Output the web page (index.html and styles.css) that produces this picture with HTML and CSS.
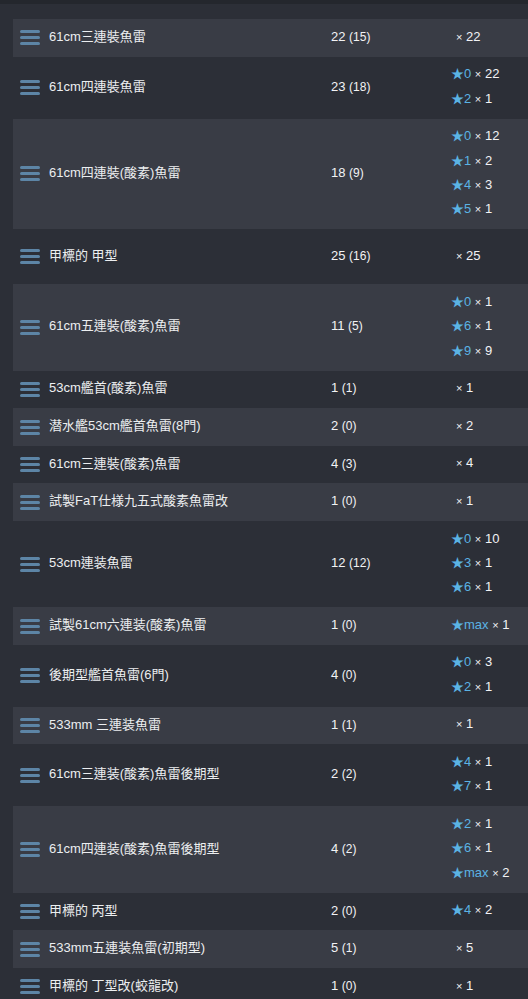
FILE: index.html
```html
<!DOCTYPE html>
<html lang="zh-Hant">
<head>
<meta charset="utf-8">
<title>魚雷一覧</title>
<link rel="stylesheet" href="styles.css">
</head>
<body>
<div class="topbar"></div>
<div class="list">
  <div class="row">
    <span class="ic"><svg viewBox="0 0 20 15" width="20" height="15"><rect x="0" y="0" width="20" height="3" rx="1.5"/><rect x="0" y="6" width="20" height="3" rx="1.5"/><rect x="0" y="12" width="20" height="3" rx="1.5"/></svg></span>
    <span class="name">61cm三連裝魚雷</span>
    <span class="cnt">22 <small>(15)</small></span>
    <span class="stars"><span class="ln nostar"><i>×</i> 22</span></span>
  </div>
  <div class="row">
    <span class="ic"><svg viewBox="0 0 20 15" width="20" height="15"><rect x="0" y="0" width="20" height="3" rx="1.5"/><rect x="0" y="6" width="20" height="3" rx="1.5"/><rect x="0" y="12" width="20" height="3" rx="1.5"/></svg></span>
    <span class="name">61cm四連裝魚雷</span>
    <span class="cnt">23 <small>(18)</small></span>
    <span class="stars"><span class="ln"><b>★0</b> <i>×</i> 22</span><span class="ln"><b>★2</b> <i>×</i> 1</span></span>
  </div>
  <div class="row">
    <span class="ic"><svg viewBox="0 0 20 15" width="20" height="15"><rect x="0" y="0" width="20" height="3" rx="1.5"/><rect x="0" y="6" width="20" height="3" rx="1.5"/><rect x="0" y="12" width="20" height="3" rx="1.5"/></svg></span>
    <span class="name">61cm四連裝(酸素)魚雷</span>
    <span class="cnt">18 <small>(9)</small></span>
    <span class="stars"><span class="ln"><b>★0</b> <i>×</i> 12</span><span class="ln"><b>★1</b> <i>×</i> 2</span><span class="ln"><b>★4</b> <i>×</i> 3</span><span class="ln"><b>★5</b> <i>×</i> 1</span></span>
  </div>
  <div class="row tall">
    <span class="ic"><svg viewBox="0 0 20 15" width="20" height="15"><rect x="0" y="0" width="20" height="3" rx="1.5"/><rect x="0" y="6" width="20" height="3" rx="1.5"/><rect x="0" y="12" width="20" height="3" rx="1.5"/></svg></span>
    <span class="name">甲標的 甲型</span>
    <span class="cnt">25 <small>(16)</small></span>
    <span class="stars"><span class="ln nostar"><i>×</i> 25</span></span>
  </div>
  <div class="row">
    <span class="ic"><svg viewBox="0 0 20 15" width="20" height="15"><rect x="0" y="0" width="20" height="3" rx="1.5"/><rect x="0" y="6" width="20" height="3" rx="1.5"/><rect x="0" y="12" width="20" height="3" rx="1.5"/></svg></span>
    <span class="name">61cm五連裝(酸素)魚雷</span>
    <span class="cnt">11 <small>(5)</small></span>
    <span class="stars"><span class="ln"><b>★0</b> <i>×</i> 1</span><span class="ln"><b>★6</b> <i>×</i> 1</span><span class="ln"><b>★9</b> <i>×</i> 9</span></span>
  </div>
  <div class="row">
    <span class="ic"><svg viewBox="0 0 20 15" width="20" height="15"><rect x="0" y="0" width="20" height="3" rx="1.5"/><rect x="0" y="6" width="20" height="3" rx="1.5"/><rect x="0" y="12" width="20" height="3" rx="1.5"/></svg></span>
    <span class="name">53cm艦首(酸素)魚雷</span>
    <span class="cnt">1 <small>(1)</small></span>
    <span class="stars"><span class="ln nostar"><i>×</i> 1</span></span>
  </div>
  <div class="row">
    <span class="ic"><svg viewBox="0 0 20 15" width="20" height="15"><rect x="0" y="0" width="20" height="3" rx="1.5"/><rect x="0" y="6" width="20" height="3" rx="1.5"/><rect x="0" y="12" width="20" height="3" rx="1.5"/></svg></span>
    <span class="name">潜水艦53cm艦首魚雷(8門)</span>
    <span class="cnt">2 <small>(0)</small></span>
    <span class="stars"><span class="ln nostar"><i>×</i> 2</span></span>
  </div>
  <div class="row">
    <span class="ic"><svg viewBox="0 0 20 15" width="20" height="15"><rect x="0" y="0" width="20" height="3" rx="1.5"/><rect x="0" y="6" width="20" height="3" rx="1.5"/><rect x="0" y="12" width="20" height="3" rx="1.5"/></svg></span>
    <span class="name">61cm三連裝(酸素)魚雷</span>
    <span class="cnt">4 <small>(3)</small></span>
    <span class="stars"><span class="ln nostar"><i>×</i> 4</span></span>
  </div>
  <div class="row">
    <span class="ic"><svg viewBox="0 0 20 15" width="20" height="15"><rect x="0" y="0" width="20" height="3" rx="1.5"/><rect x="0" y="6" width="20" height="3" rx="1.5"/><rect x="0" y="12" width="20" height="3" rx="1.5"/></svg></span>
    <span class="name">試製FaT仕様九五式酸素魚雷改</span>
    <span class="cnt">1 <small>(0)</small></span>
    <span class="stars"><span class="ln nostar"><i>×</i> 1</span></span>
  </div>
  <div class="row">
    <span class="ic"><svg viewBox="0 0 20 15" width="20" height="15"><rect x="0" y="0" width="20" height="3" rx="1.5"/><rect x="0" y="6" width="20" height="3" rx="1.5"/><rect x="0" y="12" width="20" height="3" rx="1.5"/></svg></span>
    <span class="name">53cm連装魚雷</span>
    <span class="cnt">12 <small>(12)</small></span>
    <span class="stars"><span class="ln"><b>★0</b> <i>×</i> 10</span><span class="ln"><b>★3</b> <i>×</i> 1</span><span class="ln"><b>★6</b> <i>×</i> 1</span></span>
  </div>
  <div class="row">
    <span class="ic"><svg viewBox="0 0 20 15" width="20" height="15"><rect x="0" y="0" width="20" height="3" rx="1.5"/><rect x="0" y="6" width="20" height="3" rx="1.5"/><rect x="0" y="12" width="20" height="3" rx="1.5"/></svg></span>
    <span class="name">試製61cm六連装(酸素)魚雷</span>
    <span class="cnt">1 <small>(0)</small></span>
    <span class="stars"><span class="ln"><b>★max</b> <i>×</i> 1</span></span>
  </div>
  <div class="row">
    <span class="ic"><svg viewBox="0 0 20 15" width="20" height="15"><rect x="0" y="0" width="20" height="3" rx="1.5"/><rect x="0" y="6" width="20" height="3" rx="1.5"/><rect x="0" y="12" width="20" height="3" rx="1.5"/></svg></span>
    <span class="name">後期型艦首魚雷(6門)</span>
    <span class="cnt">4 <small>(0)</small></span>
    <span class="stars"><span class="ln"><b>★0</b> <i>×</i> 3</span><span class="ln"><b>★2</b> <i>×</i> 1</span></span>
  </div>
  <div class="row">
    <span class="ic"><svg viewBox="0 0 20 15" width="20" height="15"><rect x="0" y="0" width="20" height="3" rx="1.5"/><rect x="0" y="6" width="20" height="3" rx="1.5"/><rect x="0" y="12" width="20" height="3" rx="1.5"/></svg></span>
    <span class="name">533mm 三連装魚雷</span>
    <span class="cnt">1 <small>(1)</small></span>
    <span class="stars"><span class="ln nostar"><i>×</i> 1</span></span>
  </div>
  <div class="row">
    <span class="ic"><svg viewBox="0 0 20 15" width="20" height="15"><rect x="0" y="0" width="20" height="3" rx="1.5"/><rect x="0" y="6" width="20" height="3" rx="1.5"/><rect x="0" y="12" width="20" height="3" rx="1.5"/></svg></span>
    <span class="name">61cm三連装(酸素)魚雷後期型</span>
    <span class="cnt">2 <small>(2)</small></span>
    <span class="stars"><span class="ln"><b>★4</b> <i>×</i> 1</span><span class="ln"><b>★7</b> <i>×</i> 1</span></span>
  </div>
  <div class="row">
    <span class="ic"><svg viewBox="0 0 20 15" width="20" height="15"><rect x="0" y="0" width="20" height="3" rx="1.5"/><rect x="0" y="6" width="20" height="3" rx="1.5"/><rect x="0" y="12" width="20" height="3" rx="1.5"/></svg></span>
    <span class="name">61cm四連装(酸素)魚雷後期型</span>
    <span class="cnt">4 <small>(2)</small></span>
    <span class="stars"><span class="ln"><b>★2</b> <i>×</i> 1</span><span class="ln"><b>★6</b> <i>×</i> 1</span><span class="ln"><b>★max</b> <i>×</i> 2</span></span>
  </div>
  <div class="row">
    <span class="ic"><svg viewBox="0 0 20 15" width="20" height="15"><rect x="0" y="0" width="20" height="3" rx="1.5"/><rect x="0" y="6" width="20" height="3" rx="1.5"/><rect x="0" y="12" width="20" height="3" rx="1.5"/></svg></span>
    <span class="name">甲標的 丙型</span>
    <span class="cnt">2 <small>(0)</small></span>
    <span class="stars"><span class="ln"><b>★4</b> <i>×</i> 2</span></span>
  </div>
  <div class="row">
    <span class="ic"><svg viewBox="0 0 20 15" width="20" height="15"><rect x="0" y="0" width="20" height="3" rx="1.5"/><rect x="0" y="6" width="20" height="3" rx="1.5"/><rect x="0" y="12" width="20" height="3" rx="1.5"/></svg></span>
    <span class="name">533mm五連装魚雷(初期型)</span>
    <span class="cnt">5 <small>(1)</small></span>
    <span class="stars"><span class="ln nostar"><i>×</i> 5</span></span>
  </div>
  <div class="row">
    <span class="ic"><svg viewBox="0 0 20 15" width="20" height="15"><rect x="0" y="0" width="20" height="3" rx="1.5"/><rect x="0" y="6" width="20" height="3" rx="1.5"/><rect x="0" y="12" width="20" height="3" rx="1.5"/></svg></span>
    <span class="name">甲標的 丁型改(蛟龍改)</span>
    <span class="cnt">1 <small>(0)</small></span>
    <span class="stars"><span class="ln nostar"><i>×</i> 1</span></span>
  </div>
</div>
</body>
</html>
```

FILE: styles.css
```css
html, body {
  margin: 0;
  padding: 0;
  background: #2c2f37;
}
body {
  font-family: "Liberation Sans", Arial, "Noto Sans CJK TC", "Noto Sans CJK JP", sans-serif;
  font-size: 13px;
  color: #eceef0;
  width: 528px;
  overflow: hidden;
}
.topbar {
  height: 4px;
  background: #24272d;
}
.list {
  padding: 15px 0 0 13px;
}
.row {
  display: grid;
  grid-template-columns: 36px 282px 120px 1fr;
  align-items: center;
  padding: 5.6px 0 7.6px;
  min-height: 24.4px;
}
.row:nth-child(odd) {
  background: #393c45;
}
.row.tall {
  min-height: 41.8px;
}
.ic {
  display: flex;
  padding-left: 7px;
  padding-top: 2px;
}
.ic svg {
  display: block;
  fill: #5d85a6;
}
.name {
  white-space: nowrap;
  color: #eceef0;
  line-height: 18px;
}
.cnt {
  color: #f2f3f5;
  line-height: 18px;
}
.cnt small {
  font-size: 12px;
}
.stars {
  display: flex;
  flex-direction: column;
}
.ln {
  display: block;
  height: 24.4px;
  line-height: 24.4px;
  white-space: nowrap;
  color: #f2f3f5;
}
.ln.nostar {
  padding-left: 5px;
}
.ln b {
  font-weight: normal;
  color: #5bb3e4;
}
.ln i {
  font-style: normal;
  font-size: 11px;
}
```
